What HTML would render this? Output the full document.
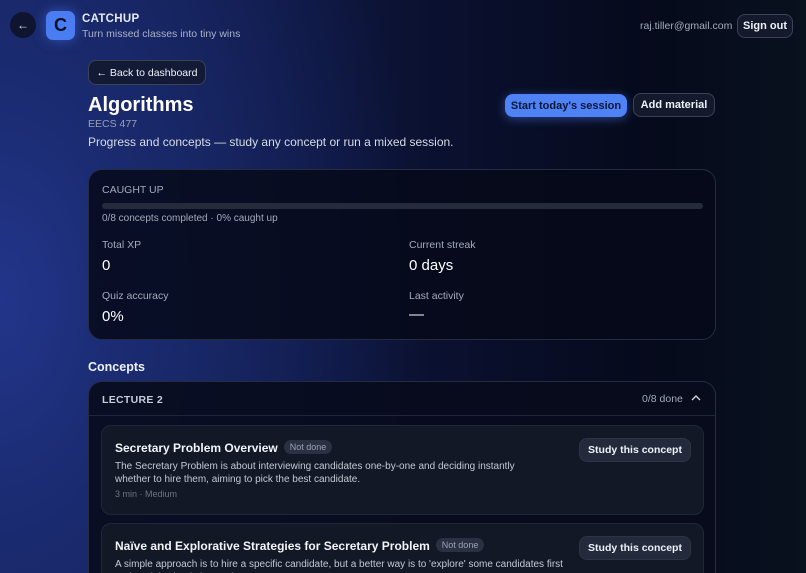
<!DOCTYPE html>
<html><head><meta charset="utf-8"><style>
*{margin:0;padding:0;box-sizing:border-box}
html,body{width:806px;height:573px;overflow:hidden}
body{font-family:"Liberation Sans",sans-serif;color:#e8ecf5;
background:radial-gradient(ellipse 420px 700px at 0px 300px,#22358a 0%,#1a2a6e 35%,rgba(15,22,60,0) 100%),linear-gradient(90deg,#15215a 0%,#0b1233 50%,#060a1c 80%,#08111e 100%);position:relative}
.a{position:absolute;white-space:nowrap}
.btn{position:absolute;border:1px solid #3a4256;border-radius:8px;background:#141a2b;color:#eef1f7;font-weight:bold;font-size:11px;display:flex;align-items:center;justify-content:center;white-space:nowrap}
.card{position:absolute;border:1px solid #252c42;border-radius:14px;background:rgba(6,9,25,0.85);overflow:hidden}
.lbl{font-size:10.5px;color:#a3aabb}
.val{font-size:15px;color:#fff}
.tag{display:inline-block;background:#2a3142;color:#9aa1b2;font-size:9px;padding:2px 6px;border-radius:8px;margin-left:6px;vertical-align:2px;font-weight:normal}
</style></head><body>
<div class="a" style="left:10px;top:12px;width:26px;height:26px;border-radius:13px;background:#0f1430;color:#dfe4ee;font-size:12px;text-align:center;line-height:26px">←</div>
<div class="a" style="left:46px;top:11px;width:29px;height:29px;border-radius:7px;background:#4a7cf2;color:#0a1028;font-weight:bold;font-size:18px;text-align:center;line-height:29px;box-shadow:0 0 12px rgba(80,130,255,.5)">C</div>
<div class="a" style="left:82px;top:13px;font-weight:bold;font-size:11.5px;letter-spacing:.3px;color:#e6eaf5">CATCHUP</div>
<div class="a" style="left:82px;top:28px;font-size:10.5px;color:#aab2c8">Turn missed classes into tiny wins</div>
<div class="a" style="left:640px;top:20px;font-size:10.5px;color:#a5acbb">raj.tiller@gmail.com</div>
<div class="btn" style="left:737px;top:14px;width:56px;height:24px">Sign out</div>
<div class="btn" style="left:88px;top:60px;width:118px;height:25px;font-weight:normal;font-size:10.5px;background:#121a36">← Back to dashboard</div>
<div class="a" style="left:88px;top:94px;font-size:20px;font-weight:bold;color:#fff">Algorithms</div>
<div class="a" style="left:88px;top:118px;font-size:10.5px;color:#98a0b4">EECS 477</div>
<div class="a" style="left:88px;top:135px;font-size:12px;color:#d6dbe6">Progress and concepts — study any concept or run a mixed session.</div>
<div class="btn" style="left:505px;top:94px;width:122px;height:23px;background:#4e82f5;border-color:#4e82f5;color:#0d1636;box-shadow:0 2px 10px rgba(80,130,255,.45)">Start today's session</div>
<div class="btn" style="left:633px;top:93px;width:82px;height:24px">Add material</div>
<div class="card" style="left:88px;top:169px;width:628px;height:171px">
<div class="a lbl" style="left:13px;top:14px;font-size:10.5px">CAUGHT UP</div>
<div class="a" style="left:13px;top:33px;width:601px;height:6px;border-radius:3px;background:#252b3b"></div>
<div class="a lbl" style="left:13px;top:43px;font-size:10px">0/8 concepts completed · 0% caught up</div>
<div class="a lbl" style="left:13px;top:69px">Total XP</div>
<div class="a val" style="left:13px;top:87px">0</div>
<div class="a lbl" style="left:320px;top:69px">Current streak</div>
<div class="a val" style="left:320px;top:87px">0 days</div>
<div class="a lbl" style="left:13px;top:120px">Quiz accuracy</div>
<div class="a val" style="left:13px;top:138px">0%</div>
<div class="a lbl" style="left:320px;top:120px">Last activity</div>
<div class="a val" style="left:320px;top:136px">—</div>
</div>
<div class="a" style="left:88px;top:360px;font-size:12.5px;font-weight:bold;color:#eef1f8">Concepts</div>
<div class="card" style="left:88px;top:381px;width:628px;height:192px;background:rgba(8,11,28,0.9);border-bottom:none;border-radius:14px 14px 0 0">
<div class="a" style="left:13px;top:12px;font-size:10.5px;font-weight:bold;color:#c8cdd9;letter-spacing:.3px">LECTURE 2</div>
<div class="a" style="left:553px;top:11px;font-size:10.5px;color:#a3aabb">0/8 done</div>
<svg class="a" style="left:602px;top:12px" width="10" height="8" viewBox="0 0 10 8"><path d="M1 6 L5 2 L9 6" fill="none" stroke="#cfd4de" stroke-width="1.4"/></svg>
<div class="a" style="left:0;top:33px;width:626px;height:1px;background:#20273a"></div>
<div class="card" style="left:12px;top:43px;width:603px;height:90px;background:#121826;border-color:#20273a;border-radius:10px">
<div class="a" style="left:13px;top:14px;font-size:12px;font-weight:bold;color:#f2f4f8">Secretary Problem Overview<span class="tag">Not done</span></div>
<div class="a" style="left:13px;top:34px;width:420px;white-space:normal;font-size:10px;line-height:13px;color:#c4c9d4">The Secretary Problem is about interviewing candidates one-by-one and deciding instantly whether to hire them, aiming to pick the best candidate.</div>
<div class="a" style="left:13px;top:63px;font-size:9px;color:#6c7385">3 min · Medium</div>
<div class="btn" style="left:477px;top:12px;width:112px;height:24px;background:#222a3b;border-color:#2c3446;font-size:10.5px">Study this concept</div>
</div>
<div class="card" style="left:12px;top:141px;width:603px;height:60px;background:#121826;border-color:#20273a;border-radius:10px">
<div class="a" style="left:13px;top:14px;font-size:12px;font-weight:bold;color:#f2f4f8">Naïve and Explorative Strategies for Secretary Problem<span class="tag">Not done</span></div>
<div class="a" style="left:13px;top:34px;width:460px;white-space:normal;font-size:10px;line-height:13px;color:#c4c9d4">A simple approach is to hire a specific candidate, but a better way is to 'explore' some candidates first and exploit what is learned.</div>
<div class="btn" style="left:477px;top:12px;width:112px;height:24px;background:#222a3b;border-color:#2c3446;font-size:10.5px">Study this concept</div>
</div>
</div>
</body></html>
